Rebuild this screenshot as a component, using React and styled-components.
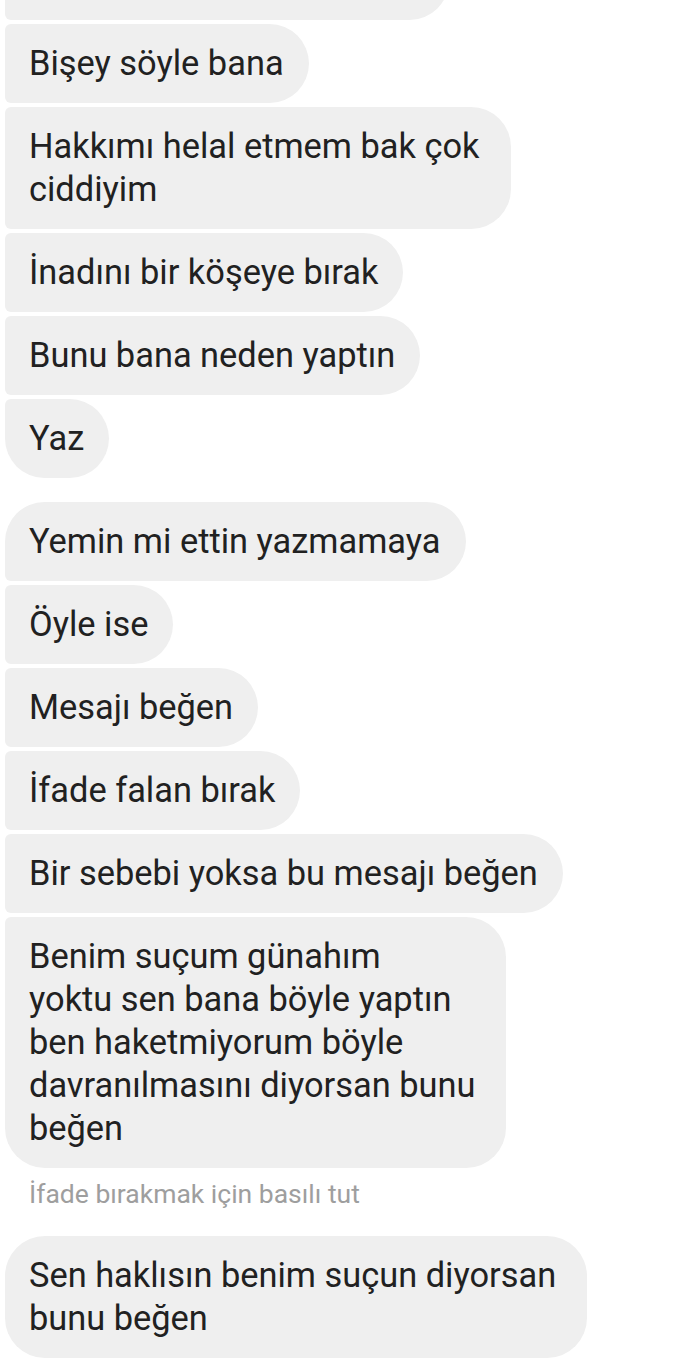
import React from "react";
import styled, { createGlobalStyle } from "styled-components";

const GlobalStyle = createGlobalStyle`
  html, body {
    margin: 0;
    padding: 0;
    background: #ffffff;
  }
  body {
    font-family: Roboto, "Noto Sans", "Liberation Sans", sans-serif;
    -webkit-font-smoothing: antialiased;
  }
`;

const Screen = styled.div`
  width: 690px;
  height: 1372px;
  overflow: hidden;
  background: #ffffff;
`;

const Thread = styled.div`
  display: flex;
  flex-direction: column;
  align-items: flex-start;
  padding-left: 5px;
  margin-top: -59px;
`;

const Group = styled.div`
  display: flex;
  flex-direction: column;
  align-items: flex-start;
  gap: 4px;
  margin-top: ${(p) => p.$space || 0}px;
`;

const Bubble = styled.div`
  background: #efefef;
  color: #212121;
  font-size: 34.4px;
  line-height: 43px;
  padding: 18px ${(p) => (p.$multi ? 31 : 25)}px 18px 24px;
  white-space: pre;
  border-radius: ${(p) => (p.$first ? 40 : 6)}px 40px 40px
    ${(p) => (p.$last ? 40 : 6)}px;
`;

const Hint = styled.div`
  color: #9e9e9e;
  font-size: 26.5px;
  line-height: 32px;
  padding-left: 24px;
  margin-top: 10px;
`;

const firstGroup = [
  "Neden cevap vermiyorsun",
  "Bişey söyle bana",
  "Hakkımı helal etmem bak çok\nciddiyim",
  "İnadını bir köşeye bırak",
  "Bunu bana neden yaptın",
  "Yaz",
];

const secondGroup = [
  "Yemin mi ettin yazmamaya",
  "Öyle ise",
  "Mesajı beğen",
  "İfade falan bırak",
  "Bir sebebi yoksa bu mesajı beğen",
  "Benim suçum günahım\nyoktu sen bana böyle yaptın\nben haketmiyorum böyle\ndavranılmasını diyorsan bunu\nbeğen",
];

const MessageGroup = ({ items, space, openTop }) => (
  <Group $space={space}>
    {items.map((text, i) => (
      <Bubble
        key={i}
        $first={i === 0 && !openTop}
        $last={i === items.length - 1}
        $multi={text.includes("\n")}
      >
        {text}
      </Bubble>
    ))}
  </Group>
);

const App = () => {
  return (
    <>
      <GlobalStyle />
      <Screen>
        <Thread>
          <MessageGroup items={firstGroup} openTop />
          <MessageGroup items={secondGroup} space={24} />
          <Hint>İfade bırakmak için basılı tut</Hint>
          <Group $space={26}>
            <Bubble $first $last $multi>
              {"Sen haklısın benim suçun diyorsan\nbunu beğen"}
            </Bubble>
          </Group>
        </Thread>
      </Screen>
    </>
  );
};

export default App;
